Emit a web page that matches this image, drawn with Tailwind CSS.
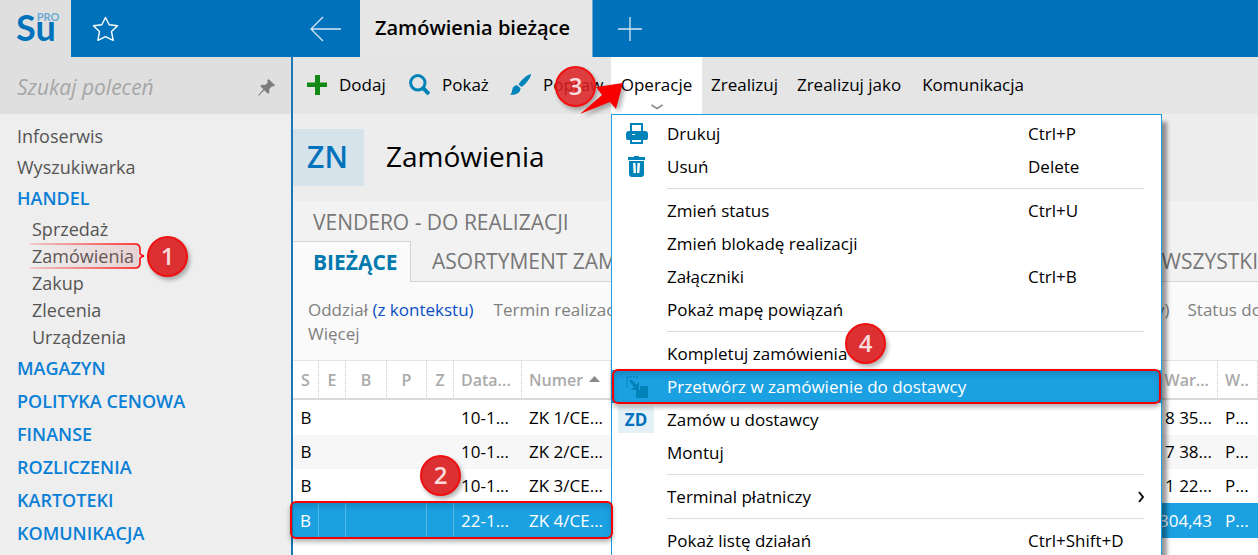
<!DOCTYPE html>
<html lang="pl">
<head>
    <meta charset="UTF-8">
    <meta name="viewport" content="width=device-width, initial-scale=1.0">
    <title>Zamówienia bieżące</title>
    <script src="https://cdn.jsdelivr.net/npm/@tailwindcss/browser@4"></script>
</head>
<body class="h-screen overflow-hidden flex flex-col bg-white text-black font-['Open_Sans','Noto_Sans',sans-serif]">

    <!-- Top bar -->
    <header class="flex h-[57px] shrink-0 bg-[#0072bb]">
        <a href="#" aria-label="Su PRO" class="w-[71px] bg-[#dfdfdf] flex items-start pl-4 pt-[7px] text-[#0072bb] font-['Lato',sans-serif]">
            <span class="text-[36px] leading-[40px] font-bold">Su</span>
            <span class="-ml-[19px] mt-1 text-[11px] leading-[12px] font-bold text-[#6ba9d3]">PRO</span>
        </a>
        <div class="w-[289px] flex items-center justify-between pl-[21px] pr-[18px]">
            <button type="button" aria-label="Ulubione">
                <svg width="28" height="28" viewBox="0 0 28 28" fill="none" stroke="#fff" stroke-width="1.4" stroke-linejoin="round"><path d="M13.5 2.5l3.700 7.200 8.300 1.100-6 5.800 1.700 8.700-7.700-3.600-7.600 3.600 1.600-8.700-6-5.800 8.300-1.100z"/></svg>
            </button>
            <button type="button" aria-label="Wstecz">
                <svg width="32" height="28" viewBox="0 0 32 28" fill="none" stroke="#d6e8f5" stroke-width="1.3"><path d="M31 14H1M13 2L1 14l12 12"/></svg>
            </button>
        </div>
        <button type="button" class="w-[232px] bg-[#e6e6e6] text-left pl-[15px] pb-[2px] text-[20px] font-semibold whitespace-nowrap">Zamówienia bieżące</button>
        <button type="button" aria-label="Nowa karta" class="pl-[25px] border-l border-[#6ba9d3]">
            <svg width="24" height="24" viewBox="0 0 24 24" fill="none" stroke="#d6e8f5" stroke-width="1.3"><path d="M12 0v24M0 12h24"/></svg>
        </button>
    </header>

    <div class="flex grow min-h-0">
        <!-- Sidebar -->
        <aside class="w-[293px] shrink-0 bg-[#eeeeee] border-r-2 border-[#1b77b5]">
            <div class="flex items-center h-[57px] bg-[#dfdfdf] pl-[17px] pr-4 pt-1">
                <input type="text" aria-label="Szukaj poleceń" placeholder="Szukaj poleceń" class="grow min-w-0 italic text-[21px] outline-none placeholder:text-[#a6a6a6]">
                <button type="button" aria-label="Przypnij">
                    <svg width="17" height="17" viewBox="0 0 17 17" fill="#7d7d7d"><path d="M10.5 0L17 6.300l-1.500 1.200-1.500-.3-2.800 3 .2 3.300-1.500 1.300-3.600-3.500L1 16.500 0 17l.4-1L5.300 10.300 2.200 7l1.400-1.300 3.600.3 2.600-2.600-.6-1.800z"/></svg>
                </button>
            </div>
            <nav class="pl-[17px] pt-[7px] text-[18px] leading-[31px] text-[#555]">
                <a href="#" class="block">Infoserwis</a>
                <a href="#" class="block">Wyszukiwarka</a>
                <a href="#" class="block font-semibold text-[#0a7fd6]">HANDEL</a>
                <ul class="pl-[15px] leading-[27px] mt-[2px] mb-px">
                    <li><a href="#">Sprzedaż</a></li>
                    <li class="relative">
                        <a href="#">Zamówienia</a>
                        <svg class="absolute -left-1 -top-1 pointer-events-none" width="126" height="36" viewBox="0 0 126 36" fill="none">
                            <defs>
                                <linearGradient id="fadeLine" gradientUnits="userSpaceOnUse" x1="2" y1="0" x2="116" y2="0"><stop offset="0" stop-color="#f00" stop-opacity=".2"/><stop offset="1" stop-color="#f00"/></linearGradient>
                                <linearGradient id="fadeFill" gradientUnits="userSpaceOnUse" x1="2" y1="0" x2="112" y2="0"><stop offset="0" stop-color="#c66" stop-opacity="0"/><stop offset="1" stop-color="#c66" stop-opacity=".2"/></linearGradient>
                            </defs>
                            <path d="M2 5H107q5 0 5 5v4q0 2 4 3-4 1-4 3v4q0 5-5 5H2z" fill="url(#fadeFill)"/>
                            <path d="M2 5H107q5 0 5 5v4q0 2 4 3-4 1-4 3v4q0 5-5 5H2" stroke="url(#fadeLine)" stroke-width="1.500"/>
                        </svg>
                        <span class="absolute left-[115px] -top-[7px] size-[41px] rounded-full border-2 border-[#f01010] bg-[#dc3032] shadow-[2px_3px_4px_rgba(0,0,0,0.3)] text-center text-[24px] leading-[35px] font-semibold text-[#fbdcdc]">1</span>
                    </li>
                    <li><a href="#">Zakup</a></li>
                    <li><a href="#">Zlecenia</a></li>
                    <li><a href="#">Urządzenia</a></li>
                </ul>
                <div class="leading-[33px] font-semibold text-[#0a7fd6]">
                    <a href="#" class="block">MAGAZYN</a>
                    <a href="#" class="block">POLITYKA CENOWA</a>
                    <a href="#" class="block">FINANSE</a>
                    <a href="#" class="block">ROZLICZENIA</a>
                    <a href="#" class="block">KARTOTEKI</a>
                    <a href="#" class="block">KOMUNIKACJA</a>
                </div>
            </nav>
        </aside>

        <main class="grow min-w-0">
            <!-- Toolbar -->
            <div class="flex h-[57px] bg-[#e5e5e5] text-[17px] whitespace-nowrap">
                <button type="button" class="flex items-center w-[102px] pl-[14px] gap-[12px] pb-[2px]">
                    <svg width="20" height="20" viewBox="0 0 20 20" class="shrink-0"><path d="M8 0h5v7.500h7v4.500h-7v8h-5v-8H0V7.500h8z" fill="#108a14"/></svg>
                    Dodaj
                </button>
                <button type="button" class="flex items-center w-[101px] pl-[14px] gap-[12px] pb-[2px]">
                    <svg width="21" height="21" viewBox="0 0 21 21" class="shrink-0" fill="none" stroke="#0083b8"><circle cx="8.800" cy="8.800" r="7.200" stroke-width="3"/><path d="M14 14l6 6" stroke-width="4"/></svg>
                    Pokaż
                </button>
                <button type="button" class="relative flex items-center w-[115px] pl-[14px] gap-[12px] pb-[2px]">
                    <svg width="21" height="21" viewBox="0 0 21 21" class="shrink-0" fill="#0083b8"><path d="M21 0c.3 3-4.500 10-9.500 13L8.500 10.300C11.500 5.500 17 .8 21 0zM7.200 11.300l3.300 3c.2 4.500-4.500 7.200-10.500 6.400 1.800-1.500 1.800-2.800 2.200-5 .6-3 2.600-4.600 5-4.400z"/></svg>
                    Popraw
                    <span class="absolute z-30 left-[59px] top-[9px] size-[41px] rounded-full border-2 border-[#f01010] bg-[#dc2022]/85 shadow-[2px_3px_4px_rgba(0,0,0,0.3)] text-center text-[24px] leading-[35px] font-semibold text-[#fbdcdc]">3</span>
                </button>
                <div class="relative w-[91px] bg-white">
                    <button type="button" class="size-full text-center pb-[2px]">Operacje</button>
                    <svg class="absolute left-[40px] top-[47px]" width="12" height="6" viewBox="0 0 12 6" fill="none" stroke="#8a8a8a" stroke-width="1.500"><path d="M.5 1L6 4.500 11.500 1"/></svg>
                    <svg class="absolute z-30 -left-[32px] top-[24px] drop-shadow-[3px_3px_2px_rgba(0,0,0,0.3)]" width="46" height="36" viewBox="0 0 46 36"><path d="M44 2L17 6l6 8L1 33l30-12 6 7z" fill="#f80000"/></svg>

                    <!-- Drop-down menu -->
                    <div class="absolute z-20 left-0 top-[57px] w-[551px] h-[460px] bg-white border border-[#1b9fe0] pt-[2px] shadow-[5px_8px_4px_rgba(0,0,0,0.4)]">
                        <button type="button" class="flex items-center w-full h-[33px] pr-4 text-left">
                            <span class="w-[55px] flex justify-center pr-[6px]">
                                <svg width="22" height="21" viewBox="0 0 22 21" fill="#0083b8"><path d="M4 0h13v8h2q3 0 3 3v4q0 2-2 2h-3v4H4v-4H2q-2 0-2-2v-4q0-3 3-3h1zM6 2v6h9V2zM6 17v2h9v-2zM6 11v1h3v-1z" fill-rule="evenodd"/></svg>
                            </span>
                            <span class="grow">Drukuj</span><span class="w-[117px]">Ctrl+P</span>
                        </button>
                        <button type="button" class="flex items-center w-full h-[33px] pr-4 text-left">
                            <span class="w-[55px] flex justify-center pr-[6px]">
                                <svg width="18" height="21" viewBox="0 0 18 21" fill="#0083b8"><path d="M0 1h6V0h5v1h6v3H0zM1 5h15v13q0 3-3 3H4q-3 0-3-3zM5 7l.6 10H8L7.500 7zM9.500 7L9 17h2.400L12 7z" fill-rule="evenodd"/></svg>
                            </span>
                            <span class="grow">Usuń</span><span class="w-[117px]">Delete</span>
                        </button>
                        <hr class="ml-[55px] mr-[17px] my-[5px] border-[#dcdcdc]">
                        <button type="button" class="flex items-center w-full h-[33px] pl-[55px] pr-4 text-left"><span class="grow">Zmień status</span><span class="w-[117px]">Ctrl+U</span></button>
                        <button type="button" class="flex items-center w-full h-[33px] pl-[55px] pr-4 text-left">Zmień blokadę realizacji</button>
                        <button type="button" class="flex items-center w-full h-[33px] pl-[55px] pr-4 text-left"><span class="grow">Załączniki</span><span class="w-[117px]">Ctrl+B</span></button>
                        <button type="button" class="flex items-center w-full h-[33px] pl-[55px] pr-4 text-left">Pokaż mapę powiązań</button>
                        <hr class="ml-[55px] mr-[17px] my-[5px] border-[#dcdcdc]">
                        <button type="button" class="relative flex items-center w-full h-[33px] pl-[55px] pr-4 text-left">
                            Kompletuj zamówienia
                            <span class="absolute z-10 left-[233px] -top-[14px] size-[41px] rounded-full border-2 border-[#f01010] bg-[#dc3032] shadow-[2px_3px_4px_rgba(0,0,0,0.3)] text-center text-[24px] leading-[35px] font-semibold text-[#fbdcdc]">4</span>
                        </button>
                        <button type="button" class="relative flex items-center w-full h-[33px] text-left bg-[#1ba1e2] text-white">
                            <span class="w-[55px] flex justify-center pr-[6px]">
                                <svg width="22" height="22" viewBox="0 0 22 22" fill="#0083b8"><path d="M14 10h8v12H10v-8h4z"/><path d="M3.500 5.500l2-2 5 5L13 6v8H5l2.800-2.800z"/><path d="M1 1h11M1 1v12" fill="none" stroke="#0083b8" stroke-width="1.500" stroke-dasharray="1.500 1.500"/></svg>
                            </span>
                            Przetwórz w zamówienie do dostawcy
                            <span class="absolute left-0 right-0 -inset-y-px border-2 border-[#f40000] rounded-md shadow-[inset_0_4px_6px_rgba(0,0,0,0.15),0_3px_5px_rgba(0,0,0,0.3)]"></span>
                        </button>
                        <button type="button" class="flex items-center w-full h-[33px] text-left">
                            <span class="w-[55px] pl-[6px]"><span class="block w-[36px] h-[27px] bg-[#e5f0f7] text-center leading-[27px] font-bold text-[#0072bb]">ZD</span></span>
                            Zamów u dostawcy
                        </button>
                        <button type="button" class="flex items-center w-full h-[33px] pl-[55px] pr-4 text-left">Montuj</button>
                        <hr class="ml-[55px] mr-[17px] my-[5px] border-[#dcdcdc]">
                        <button type="button" class="flex items-center w-full h-[33px] pl-[55px] pr-4 text-left">
                            <span class="grow">Terminal płatniczy</span>
                            <svg width="7" height="12" viewBox="0 0 7 12" fill="none" stroke="#111" stroke-width="2"><path d="M1 1l4 5-4 5"/></svg>
                        </button>
                        <hr class="ml-[55px] mr-[17px] my-[5px] border-[#dcdcdc]">
                        <button type="button" class="flex items-center w-full h-[33px] pl-[55px] pr-4 text-left"><span class="grow">Pokaż listę działań</span><span class="w-[117px]">Ctrl+Shift+D</span></button>
                    </div>
                </div>
                <button type="button" class="ml-[9px] pb-[2px]">Zrealizuj</button>
                <button type="button" class="ml-[19px] pb-[2px]">Zrealizuj jako</button>
                <button type="button" class="ml-[21px] pb-[2px]">Komunikacja</button>
            </div>

            <!-- Title -->
            <div class="flex items-center h-[87px] bg-[#ededed]">
                <span class="w-[71px] h-[57px] pr-[2px] bg-[#d7e3ea] text-center text-[30px] leading-[55px] font-semibold text-[#0072bb]">ZN</span>
                <h1 class="pl-[22px] pb-1 text-[28px]">Zamówienia</h1>
            </div>

            <!-- Tabs -->
            <div class="bg-[#f2f2f2] text-[21px] text-[#777] whitespace-nowrap">
                <a href="#" class="block h-[40px] pl-5 leading-[43px]">VENDERO - DO REALIZACJI</a>
                <div class="flex h-[41px] leading-[41px]">
                    <a href="#" class="w-[118px] shrink-0 pl-5 bg-[#fafafa] border-t border-r border-[#d4d4d4] font-bold text-[#0079ae]">BIEŻĄCE</a>
                    <div class="flex grow min-w-0 justify-between pl-[21px] border-b border-[#d4d4d4]">
                        <a href="#">ASORTYMENT ZAM</a>
                        <a href="#">WSZYSTKI</a>
                    </div>
                </div>
            </div>

            <!-- Filters -->
            <div class="h-[79px] pl-[15px] pt-[16px] bg-[#fafafa] border-b border-[#e4e4e4] text-[17px] leading-[24px] text-[#808080] whitespace-nowrap">
                <div class="flex -mr-1">
                    <button type="button">Oddział <span class="text-[#0b4fc4]">(z kontekstu)</span></button>
                    <button type="button" class="ml-5">Termin realizac</button>
                    <span class="grow text-right">y)</span>
                    <button type="button" class="ml-[18px]">Status do</button>
                </div>
                <button type="button">Więcej</button>
            </div>

            <!-- Orders -->
            <table class="w-full table-fixed border-separate border-spacing-0 text-[17px] whitespace-nowrap">
                <colgroup>
                    <col class="w-[26px]"><col class="w-[27px]"><col class="w-[41px]"><col class="w-[40px]"><col class="w-[27px]"><col class="w-[68px]"><col class="w-[89px]"><col><col class="w-[76px]"><col class="w-[40px]">
                </colgroup>
                <thead class="text-[16px] text-[#aaa]">
                    <tr class="h-[39px] *:font-semibold *:border-b-2 *:border-b-[#d9d9d9] *:border-r *:border-r-[#c8c8c8] *:[border-right-style:dotted]">
                        <th>S</th>
                        <th>E</th>
                        <th>B</th>
                        <th>P</th>
                        <th>Z</th>
                        <th class="text-left pl-[7px]">Data...</th>
                        <th class="text-left pl-[7px]">Numer <svg class="inline mb-1 ml-[2px]" width="11" height="6" viewBox="0 0 11 6" fill="#888"><path d="M0 6L5.500 0 11 6z"/></svg></th>
                        <th></th>
                        <th class="text-right pr-[8px]">War...</th>
                        <th class="text-left pl-[7px]">W..</th>
                    </tr>
                </thead>
                <tbody>
                    <tr class="h-[35px]"><td class="text-center">B</td><td></td><td></td><td></td><td></td><td class="pl-[7px]">10-1...</td><td class="pl-[7px]">ZK 1/CE...</td><td></td><td class="text-right pr-[6px]">8 35...</td><td class="pl-[7px]">P...</td></tr>
                    <tr class="h-[34px] bg-[#f7f7f7]"><td class="text-center">B</td><td></td><td></td><td></td><td></td><td class="pl-[7px]">10-1...</td><td class="pl-[7px]">ZK 2/CE...</td><td></td><td class="text-right pr-[6px]">7 38...</td><td class="pl-[7px]">P...</td></tr>
                    <tr class="h-[34px]"><td class="text-center">B</td><td></td><td></td><td></td><td class="relative"><span class="absolute z-10 -left-[7px] -top-[14px] size-[41px] rounded-full border-2 border-[#f01010] bg-[#dc3032] shadow-[2px_3px_4px_rgba(0,0,0,0.3)] text-center text-[24px] leading-[35px] font-semibold text-[#fbdcdc]">2</span></td><td class="pl-[7px]">10-1...</td><td class="pl-[7px]">ZK 3/CE...</td><td></td><td class="text-right pr-[6px]">1 22...</td><td class="pl-[7px]">P...</td></tr>
                    <tr class="h-[35px] bg-[#1ba1e2] text-white">
                        <td class="relative text-center border-r border-[#56b8e8]">B<span class="absolute z-30 -left-[3px] -top-[2px] w-[323px] h-[38px] border-2 border-[#f40000] rounded-md shadow-[inset_0_4px_6px_rgba(0,0,0,0.15),0_3px_5px_rgba(0,0,0,0.3)]"></span></td>
                        <td class="border-r border-[#56b8e8]"></td><td></td><td class="border-r border-[#56b8e8]"></td><td class="border-r border-[#56b8e8]"></td>
                        <td class="pl-[7px]">22-1...</td><td class="pl-[7px]">ZK 4/CE...</td><td></td><td class="text-right pr-[6px]">304,43</td><td class="pl-[7px]">P...</td>
                    </tr>
                </tbody>
            </table>
        </main>
    </div>
</body>
</html>
